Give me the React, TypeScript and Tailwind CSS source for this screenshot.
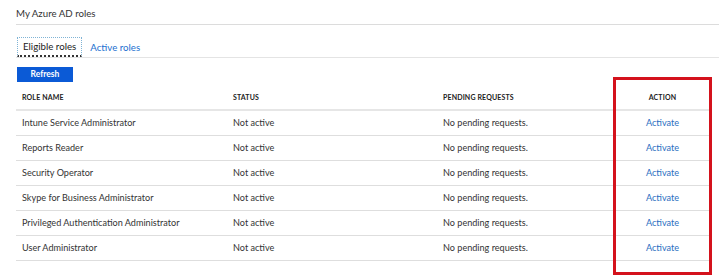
import React from 'react';

interface RoleRow {
  name: string;
  status: string;
  pending: string;
}

const rows: RoleRow[] = [
  { name: 'Intune Service Administrator', status: 'Not active', pending: 'No pending requests.' },
  { name: 'Reports Reader', status: 'Not active', pending: 'No pending requests.' },
  { name: 'Security Operator', status: 'Not active', pending: 'No pending requests.' },
  { name: 'Skype for Business Administrator', status: 'Not active', pending: 'No pending requests.' },
  { name: 'Privileged Authentication Administrator', status: 'Not active', pending: 'No pending requests.' },
  { name: 'User Administrator', status: 'Not active', pending: 'No pending requests.' },
];

const cols = 'grid grid-cols-[211px_210px_176px_99px]';

const App: React.FC = () => {
  return (
    <div className="relative w-[719px] h-[276px] bg-white pl-4 text-[#333] font-['Lato',sans-serif] overflow-hidden">
      {/* title */}
      <div className="h-[25px] border-b border-[#dcdcdc] flex items-center text-[9.7px]">
        <span className="mt-[3px]">My Azure AD roles</span>
      </div>

      {/* tabs */}
      <div className="h-[33px] border-b border-[#e4e4e4] flex items-end pl-px">
        <div className="h-[20px] px-[5px] flex items-center border border-dotted border-[#7fb3d5] border-b-2 border-b-[#333] border-b-solid text-[9.7px] text-[#222]">
          Eligible roles
        </div>
        <div className="h-[20px] ml-[8px] flex items-center text-[9.7px] text-[#1a6fd0]">Active roles</div>
      </div>

      {/* refresh */}
      <div className="pt-[9px] pl-px">
        <button
          type="button"
          className="w-[56px] h-[15px] bg-[#0b5ad6] text-white text-[8.5px] font-bold flex items-center justify-center"
        >
          Refresh
        </button>
      </div>

      {/* table */}
      <div className="mt-[4px] w-[696px]">
        <div className={`${cols} h-[25px] items-center border-b-2 border-[#e6e6e6] text-[7px] font-bold text-[#222] tracking-[0.02em]`}>
          <div className="pl-[6px]">ROLE NAME</div>
          <div className="pl-[6px]">STATUS</div>
          <div className="pl-[6px]">PENDING REQUESTS</div>
          <div className="text-center">ACTION</div>
        </div>
        {rows.map(row => (
          <div key={row.name} className={`${cols} h-[25px] items-center border-b border-[#dedede] text-[9.1px] text-[#333]`}>
            <div className="pl-[6px]">{row.name}</div>
            <div className="pl-[6px]">{row.status}</div>
            <div className="pl-[6px]">{row.pending}</div>
            <div className="text-center text-[#2a6ebf]">Activate</div>
          </div>
        ))}
      </div>

      {/* highlight annotation */}
      <div className="absolute left-[613px] top-[77px] w-[99px] h-[198px] border-[3px] border-[#d4121c]" />
    </div>
  );
};

export default App;
